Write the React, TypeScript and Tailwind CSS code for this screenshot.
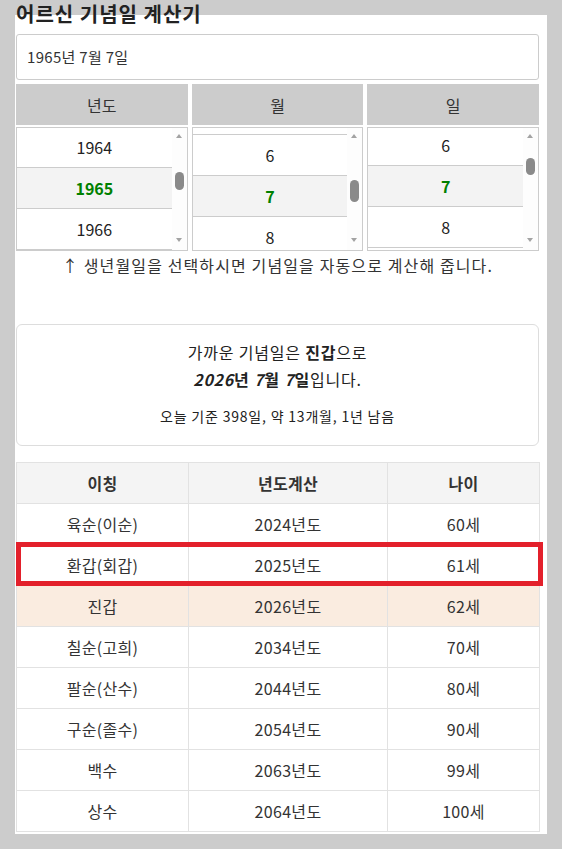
import React from "react";

type ListProps = {
  items: string[];
  selected: string;
  offsetClass: string;
  thumbClass: string;
};

function PickerList({ items, selected, offsetClass, thumbClass }: ListProps) {
  return (
    <div className="flex h-[124px] border border-[#cccccc] bg-white overflow-hidden">
      <div className="flex-1 overflow-hidden">
        <div className={offsetClass}>
          {items.map((it) => {
            const sel = it === selected;
            return (
              <div
                key={it}
                className={
                  sel
                    ? "h-[41px] border-b border-[#cccccc] bg-[#f3f3f3] flex items-center justify-center text-[16px] font-bold text-[#008000]"
                    : "h-[41px] border-b border-[#cccccc] bg-white flex items-center justify-center text-[16px] text-[#222222]"
                }
              >
                {it}
              </div>
            );
          })}
        </div>
      </div>
      <div className="relative w-[15px] bg-[#fdfdfd]">
        <div className="absolute left-[4px] top-[6px] w-0 h-0 border-l-[3.5px] border-r-[3.5px] border-b-[4px] border-l-transparent border-r-transparent border-b-[#a3a3a3]" />
        <div className={"absolute left-[3px] w-[9px] rounded-full bg-[#8a8a8a] " + thumbClass} />
        <div className="absolute left-[4px] bottom-[8px] w-0 h-0 border-l-[3.5px] border-r-[3.5px] border-t-[4px] border-l-transparent border-r-transparent border-t-[#a3a3a3]" />
      </div>
    </div>
  );
}

const rows = [
  { name: "육순(이순)", year: "2024년도", age: "60세" },
  { name: "환갑(회갑)", year: "2025년도", age: "61세" },
  { name: "진갑", year: "2026년도", age: "62세", hl: true },
  { name: "칠순(고희)", year: "2034년도", age: "70세" },
  { name: "팔순(산수)", year: "2044년도", age: "80세" },
  { name: "구순(졸수)", year: "2054년도", age: "90세" },
  { name: "백수", year: "2063년도", age: "99세" },
  { name: "상수", year: "2064년도", age: "100세" },
];

export default function App() {
  return (
    <div
      className="min-h-screen bg-[#cccccc] pl-[15px] pr-[15px] pt-[15px] pb-[16px] text-[#333333]"
      style={{ fontFamily: '"Noto Sans CJK KR", "Noto Sans", sans-serif' }}
    >
      <div className="flow-root w-[532px] bg-white pl-[1px] pr-[8px] pb-[2px]">
        <h1 className="-mt-[15px] h-[28px] leading-[28px] text-[20px] font-bold text-[#222222] tracking-[0.05em]">
          어르신 기념일 계산기
        </h1>
        <div className="mt-[6px] h-[46px] border border-[#cccccc] rounded-[3px] pl-[10px] flex items-center text-[15px] text-[#333333] tracking-[0.02em]">
          1965년 7월 7일
        </div>
        <div className="mt-[4px] grid grid-cols-3 gap-x-[4px]">
          <div className="h-[41px] bg-[#cccccc] flex items-center justify-center text-[16px] text-[#333333]">년도</div>
          <div className="h-[41px] bg-[#cccccc] flex items-center justify-center text-[16px] text-[#333333]">월</div>
          <div className="h-[41px] bg-[#cccccc] flex items-center justify-center text-[16px] text-[#333333]">일</div>
          <div className="mt-[2px]">
            <PickerList
              items={["1964", "1965", "1966", "1967"]}
              selected="1965"
              offsetClass="-mt-[1px]"
              thumbClass="top-[44px] h-[18px]"
            />
          </div>
          <div className="mt-[2px]">
            <PickerList
              items={["5", "6", "7", "8"]}
              selected="7"
              offsetClass="-mt-[34px]"
              thumbClass="top-[52px] h-[22px]"
            />
          </div>
          <div className="mt-[2px]">
            <PickerList
              items={["6", "7", "8", "9"]}
              selected="7"
              offsetClass="-mt-[3px]"
              thumbClass="top-[30px] h-[17px]"
            />
          </div>
        </div>
        <p className="mt-[2px] text-center text-[16px] leading-[24px] text-[#333333] tracking-[0.07em]">
          ↑ 생년월일을 선택하시면 기념일을 자동으로 계산해 줍니다.
        </p>
        <div className="mt-[47px] border border-[#dddddd] rounded-[6px] pt-[14px] pb-[18px] text-center text-[#222222] tracking-[0.05em]">
          <p className="text-[16px] leading-[27px]">
            가까운 기념일은 <b>진갑</b>으로
          </p>
          <p className="text-[16px] leading-[27px]">
            <b>
              <i>2026</i>년 <i>7</i>월 <i>7</i>일
            </b>
            입니다.
          </p>
          <p className="mt-[13px] text-[14px] leading-[21px]">오늘 기준 398일, 약 13개월, 1년 남음</p>
        </div>
        <div className="relative mt-[16px]">
          <table className="w-[523px] table-fixed border-collapse text-[16px] text-[#333333] tracking-[0.02em]">
            <colgroup>
              <col className="w-[172px]" />
              <col className="w-[199px]" />
              <col className="w-[152px]" />
            </colgroup>
            <thead>
              <tr className="bg-[#f4f4f4]">
                <th className="h-[41px] border border-[#e2e2e2] font-bold text-center">이칭</th>
                <th className="h-[41px] border border-[#e2e2e2] font-bold text-center">년도계산</th>
                <th className="h-[41px] border border-[#e2e2e2] font-bold text-center">나이</th>
              </tr>
            </thead>
            <tbody>
              {rows.map((r) => (
                <tr key={r.name} className={r.hl ? "bg-[#faece0]" : "bg-white"}>
                  <td className="h-[41px] border border-[#e2e2e2] text-center p-0">{r.name}</td>
                  <td className="h-[41px] border border-[#e2e2e2] text-center p-0">{r.year}</td>
                  <td className="h-[41px] border border-[#e2e2e2] text-center p-0">{r.age}</td>
                </tr>
              ))}
            </tbody>
          </table>
          <div className="absolute left-0 top-[80px] w-[527px] h-[44px] border-[5px] border-[#e3202b] pointer-events-none" />
        </div>
      </div>
    </div>
  );
}
